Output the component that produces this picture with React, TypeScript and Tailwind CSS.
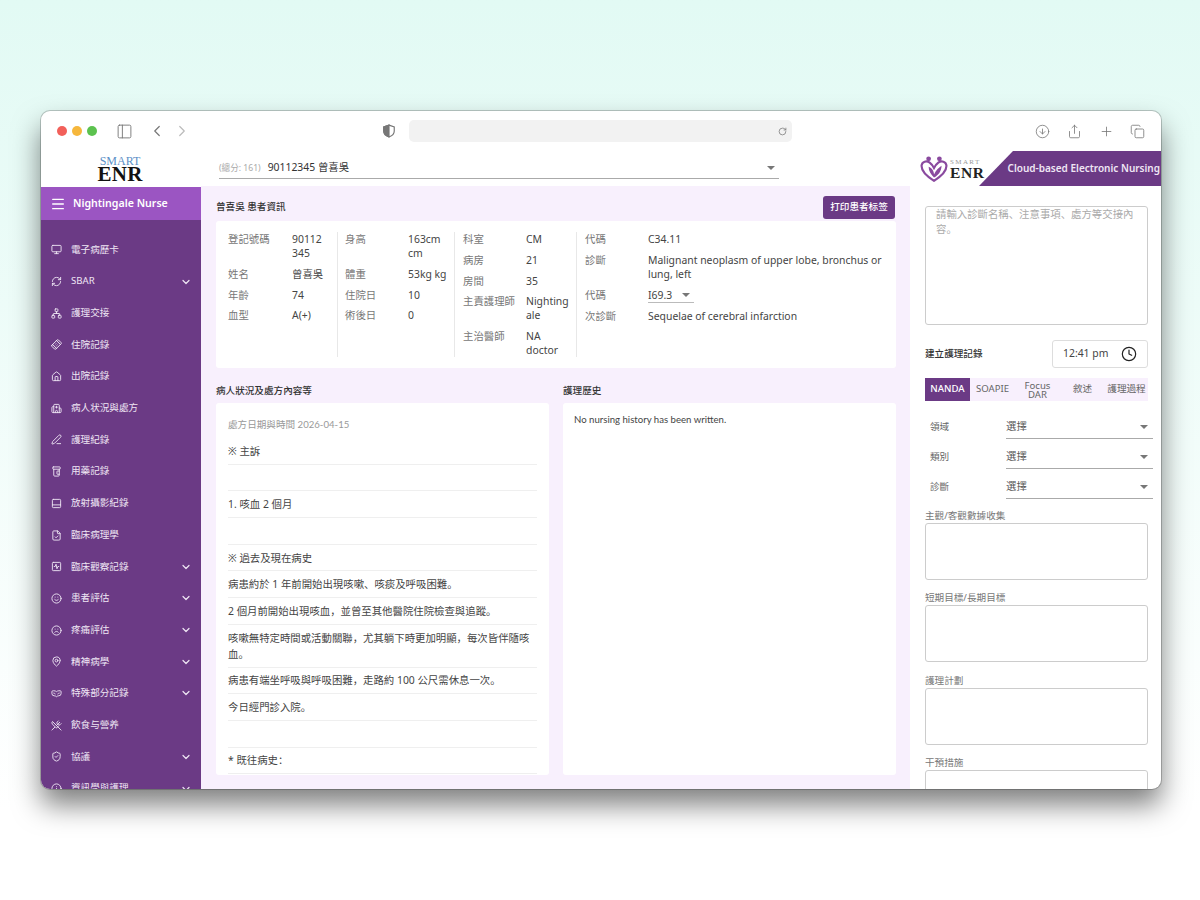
import React from 'react';
import {
  ArrowDownCircle,
  Bandage,
  ChevronDown,
  ChevronLeft,
  ChevronRight,
  Clock,
  Copy,
  FileCheck,
  Frown,
  Home,
  Hospital,
  Info,
  MapPin,
  Menu,
  Monitor,
  Network,
  PanelBottom,
  PanelLeft,
  PenLine,
  PillBottle,
  Plus,
  RefreshCw,
  RotateCw,
  Share,
  ShieldCheck,
  Smile,
  SquareActivity,
  UtensilsCrossed,
  VenetianMask,
} from 'lucide-react';

const FONT = 'font-["Noto_Sans","Noto_Sans_CJK_SC",sans-serif]';

const NAV = [
  { icon: Monitor, label: '電子病歷卡' },
  { icon: RefreshCw, label: 'SBAR', more: true },
  { icon: Network, label: '護理交接' },
  { icon: Bandage, label: '住院記錄', tilt: true },
  { icon: Home, label: '出院記錄' },
  { icon: Hospital, label: '病人状況與處方' },
  { icon: PenLine, label: '護理紀錄' },
  { icon: PillBottle, label: '用藥記錄' },
  { icon: PanelBottom, label: '放射攝影紀錄' },
  { icon: FileCheck, label: '臨床病理學' },
  { icon: SquareActivity, label: '臨床觀察記錄', more: true },
  { icon: Smile, label: '患者評估', more: true },
  { icon: Frown, label: '疼痛評估', more: true },
  { icon: MapPin, label: '精神病學', more: true },
  { icon: VenetianMask, label: '特殊部分記錄', more: true },
  { icon: UtensilsCrossed, label: '飲食与營养' },
  { icon: ShieldCheck, label: '協議', more: true },
  { icon: Info, label: '資訊學與護理', more: true },
];

const NOTES = [
  '※ 主訴',
  '',
  '1. 咳血 2 個月',
  '',
  '※ 過去及現在病史',
  '病患約於 1 年前開始出現咳嗽、咳痰及呼吸困難。',
  '2 個月前開始出現咳血，並曾至其他醫院住院檢查與追蹤。',
  '咳嗽無特定時間或活動關聯，尤其躺下時更加明顯，每次皆伴隨咳血。',
  '病患有端坐呼吸與呼吸困難，走路約 100 公尺需休息一次。',
  '今日經門診入院。',
  '',
  '* 既往病史：',
];

const Row = ({ label, value, labelWidth = 'w-[63px]', valueWidth }: { label: string; value: React.ReactNode; labelWidth?: string; valueWidth: string }) => (
  <div className="flex">
    <div className={`${labelWidth} shrink-0 text-[#777]`}>{label}</div>
    <div className={`${valueWidth} text-[#444]`}>{value}</div>
  </div>
);

const Select = ({ label }: { label: string }) => (
  <div className="flex h-[30px] items-center pl-[5px]">
    <div className="w-[76px] shrink-0 text-[9.6px] text-[#666]">{label}</div>
    <div className="flex h-[23px] w-[147px] shrink-0 items-center justify-between border-b border-[#aaa] pr-[5px] text-[10.4px] text-[#555]">
      <span>選擇</span>
      <span className="h-0 w-0 border-x-[4px] border-t-[4px] border-x-transparent border-t-[#777]" />
    </div>
  </div>
);

const NoteField = ({ label }: { label: string }) => (
  <div className="mb-[11.3px]">
    <div className="mb-[1px] text-[9.6px] leading-[13px] text-[#777]">{label}</div>
    <div className="h-[57px] rounded-[3px] border border-[#ccc]" />
  </div>
);

export default function App() {
  return (
    <div className={`flex h-[900px] w-[1200px] items-center justify-center bg-gradient-to-b from-[#e2faf4] to-white to-90% pl-[2px] ${FONT}`}>
      <div className="flex h-[678px] w-[1120px] flex-col overflow-hidden rounded-[9px] bg-white shadow-[0_16px_28px_rgba(0,0,0,0.5)] ring-1 ring-black/20">
        <div className="flex h-[40px] shrink-0 items-center pl-[16px] pr-[15px] text-[#777]">
          <span className="h-[10px] w-[10px] rounded-full bg-[#f2605a]" />
          <span className="ml-[5px] h-[10px] w-[10px] rounded-full bg-[#f6b73c]" />
          <span className="ml-[5px] h-[10px] w-[10px] rounded-full bg-[#5cc24f]" />
          <PanelLeft size={17} strokeWidth={1.3} className="ml-[19px]" />
          <ChevronLeft size={18} strokeWidth={1.6} className="ml-[15px]" />
          <ChevronRight size={18} strokeWidth={1.6} className="ml-[7px] text-[#bbb]" />
          <svg width="14" height="14" viewBox="0 0 24 24" className="ml-[191px]" fill="none" stroke="currentColor" strokeWidth="2">
            <path d="M12 2 L21 5 V12 C21 17 17 20.5 12 22 C7 20.5 3 17 3 12 V5 Z" />
            <path d="M12 2 L3 5 V12 C3 17 7 20.5 12 22 Z" fill="currentColor" />
          </svg>
          <div className="ml-[13px] flex h-[22px] w-[383px] items-center justify-end rounded-[5px] bg-[#f2f2f2] pr-[5px]">
            <RotateCw size={9} />
          </div>
          <ArrowDownCircle size={15} strokeWidth={1.3} className="ml-[243px]" />
          <Share size={15} strokeWidth={1.3} className="ml-[17px]" />
          <Plus size={15} strokeWidth={1.3} className="ml-[17px]" />
          <Copy size={15} strokeWidth={1.3} className="ml-[16px]" />
        </div>

        <div className="flex min-h-0 flex-1">
          <div className="flex w-[160px] shrink-0 flex-col">
            <div className="flex h-[36px] shrink-0 flex-col items-center justify-center pr-[2px] font-['Liberation_Serif',serif]">
              <span className="text-[12px] leading-[10px] text-[#5b8fc7]">SMART</span>
              <span className="text-[21px] font-bold leading-[17px] tracking-[0.3px] text-[#111]">ENR</span>
            </div>
            <div className="flex h-[33px] shrink-0 items-center bg-[#9b55c2] pl-[9px] text-white">
              <Menu size={16} />
              <span className="ml-[7px] text-[10.6px] font-semibold">Nightingale Nurse</span>
            </div>
            <div className="min-h-0 flex-1 overflow-hidden bg-[#6b3a85] pt-[14px]">
              {NAV.map(({ icon: Icon, label, more, tilt }) => (
                <div key={label} className="flex h-[31.7px] items-center pl-[10px] pr-[9px] text-[#efe6f4]">
                  <Icon size={11} strokeWidth={2} className={tilt ? '-rotate-45' : ''} />
                  <span className="ml-[9px] flex-1 text-[9.6px]">{label}</span>
                  {more && <ChevronDown size={12} strokeWidth={2.4} />}
                </div>
              ))}
            </div>
          </div>

          <div className="flex w-[709px] shrink-0 flex-col">
            <div className="flex h-[35px] shrink-0 items-center pl-[18px]">
              <div className="flex h-[20px] w-[560px] items-center border-b border-[#aaa] pr-[4px]">
                <span className="text-[8.6px] text-[#aaa]">(總分: 161)</span>
                <span className="ml-[7px] flex-1 text-[10.4px] text-[#333]">90112345 曾喜吳</span>
                <span className="h-0 w-0 border-x-[4px] border-t-[4px] border-x-transparent border-t-[#777]" />
              </div>
            </div>
            <div className="min-h-0 flex-1 bg-[#f8f0fd] pl-[15px] pr-[14px]">
              <div className="flex h-[35px] items-center justify-between pt-[7px]">
                <span className="text-[9.6px] font-medium text-[#333]">曾喜吳 患者資訊</span>
                <button className="mr-[1px] h-[23px] w-[72px] rounded-[3px] bg-[#6b3a85] text-[9.6px] font-medium text-white">打印患者标签</button>
              </div>

              <div className="flex h-[147px] rounded-[3px] bg-white py-[11px] text-[10.4px] leading-[14px]">
                <div className="flex w-[122px] shrink-0 flex-col gap-[6.8px] border-r border-[#e8e8e8] pl-[12px]">
                  <Row label="登記號碼" labelWidth="w-[64px]" value={<>90112<br />345</>} valueWidth="w-[36px]" />
                  <Row label="姓名" labelWidth="w-[64px]" value="曾喜吳" valueWidth="w-[36px]" />
                  <Row label="年齡" labelWidth="w-[64px]" value="74" valueWidth="w-[36px]" />
                  <Row label="血型" labelWidth="w-[64px]" value="A(+)" valueWidth="w-[36px]" />
                </div>
                <div className="flex w-[117px] shrink-0 flex-col gap-[6.8px] border-r border-[#e8e8e8] pl-[7px]">
                  <Row label="身高" value={<>163cm<br />cm</>} valueWidth="w-[42px]" />
                  <Row label="體重" value="53kg kg" valueWidth="w-[42px]" />
                  <Row label="住院日" value="10" valueWidth="w-[42px]" />
                  <Row label="術後日" value="0" valueWidth="w-[42px]" />
                </div>
                <div className="flex w-[122px] shrink-0 flex-col gap-[6.8px] border-r border-[#e8e8e8] pl-[8px]">
                  <Row label="科室" value="CM" valueWidth="w-[45px]" />
                  <Row label="病房" value="21" valueWidth="w-[45px]" />
                  <Row label="房間" value="35" valueWidth="w-[45px]" />
                  <Row label="主責護理師" value={<>Nighting<br />ale</>} valueWidth="w-[45px]" />
                  <Row label="主治醫師" value={<>NA<br />doctor</>} valueWidth="w-[45px]" />
                </div>
                <div className="flex flex-1 flex-col gap-[6.8px] pl-[8px]">
                  <Row label="代碼" value="C34.11" valueWidth="w-[240px]" />
                  <Row label="診斷" value="Malignant neoplasm of upper lobe, bronchus or lung, left" valueWidth="w-[240px]" />
                  <Row
                    label="代碼"
                    value={
                      <div className="flex h-[15px] w-[46px] items-center justify-between border-b border-[#bbb] pr-[4px]">
                        <span>I69.3</span>
                        <span className="h-0 w-0 border-x-[4px] border-t-[4px] border-x-transparent border-t-[#777]" />
                      </div>
                    }
                    valueWidth="w-[240px]"
                  />
                  <Row label="次診斷" value="Sequelae of cerebral infarction" valueWidth="w-[240px]" />
                </div>
              </div>

              <div className="mt-[16px] flex gap-[14px]">
                <div className="w-[333px]">
                  <div className="mb-[6px] text-[9.6px] font-medium leading-[13px] text-[#333]">病人狀況及處方內容等</div>
                  <div className="h-[372px] overflow-hidden rounded-[3px] bg-white px-[12px] pt-[14px]">
                    <div className="mb-[5px] font-['Lato','Noto_Sans_CJK_SC',sans-serif] text-[9.6px] leading-[16px] text-[#999]">處方日期與時間 2026-04-15</div>
                    {NOTES.map((line, i) => (
                      <div key={i} className="min-h-[26.7px] border-b border-[#efefef] py-[4.85px] text-[10.4px] leading-[16px] text-[#444]">
                        {line}
                      </div>
                    ))}
                  </div>
                </div>
                <div className="w-[333px]">
                  <div className="mb-[6px] text-[9.6px] font-medium leading-[13px] text-[#333]">護理歷史</div>
                  <div className="h-[372px] rounded-[3px] bg-white px-[11px] pt-[9px] font-['Lato',sans-serif] text-[9.6px] leading-[16px] text-[#444]">
                    No nursing history has been written.
                  </div>
                </div>
              </div>
            </div>
          </div>

          <div className="min-w-0 flex-1 overflow-hidden">
            <div className="flex h-[35px] items-center">
              <svg width="28" height="28" viewBox="0 0 26 26" className="ml-[10px] shrink-0" fill="none" stroke="#8a4a9f">
                <circle cx="8" cy="3.5" r="2.2" fill="#8a4a9f" stroke="none" />
                <circle cx="18" cy="3.5" r="2.2" fill="#8a4a9f" stroke="none" />
                <path d="M13 24 C5 19 1 14 1.5 9.5 C2 6 6 5 9 7 C11 8.5 12 10 13 12 C14 10 15 8.5 17 7 C20 5 24 6 24.5 9.5 C25 14 21 19 13 24Z" strokeWidth="2" />
                <path d="M8 11 C11 12 13 15 13 18 C15 14 17 12 20 10 C20 15 17 19 13 21 C10 18 8 15 8 11Z" fill="#8a4a9f" stroke="none" />
              </svg>
              <div className="ml-[2px] flex w-[39px] shrink-0 flex-col font-['Liberation_Serif',serif]">
                <span className="text-[7px] leading-[8px] tracking-[1.4px] text-[#999]">SMART</span>
                <span className="text-[15.5px] font-bold leading-[13px] tracking-[0.6px] text-[#222]">ENR</span>
              </div>
              <div className="ml-[-10px] flex h-[35px] w-[182px] shrink-0 items-center justify-end bg-[#6b3a85] pr-[1px] [clip-path:polygon(34px_0,100%_0,100%_100%,0_100%)]">
                <span className="whitespace-nowrap text-[10px] font-semibold text-[#efe6f4]">Cloud-based Electronic Nursing</span>
              </div>
            </div>

            <div className="pl-[15px] pr-[13px] pt-[20px]">
              <div className="h-[119px] rounded-[3px] border border-[#ccc] px-[10px] text-[10.4px] leading-[15px] text-[#aaa]">
                請輸入診斷名稱、注意事項、處方等交接內容。
              </div>

              <div className="mt-[15px] flex items-center justify-between">
                <span className="text-[9.6px] font-medium text-[#333]">建立護理記錄</span>
                <div className="flex h-[28px] w-[96px] items-center justify-between rounded-[3px] border border-[#ddd] px-[10px] text-[10.4px] text-[#444]">
                  <span>12:41 pm</span>
                  <Clock size={16} strokeWidth={1.8} className="text-[#222]" />
                </div>
              </div>

              <div className="mt-[10px] flex h-[23px] w-[223px] bg-[#f8f0fd] text-center text-[9.6px] text-[#666]">
                <div className="flex w-[45px] items-center justify-center bg-[#6b3a85] font-medium text-white">NANDA</div>
                <div className="flex w-[45px] items-center justify-center">SOAPIE</div>
                <div className="flex w-[45px] items-center justify-center leading-[9px]">Focus<br />DAR</div>
                <div className="flex w-[45px] items-center justify-center">敘述</div>
                <div className="flex w-[43px] items-center justify-center">護理過程</div>
              </div>

              <div className="mt-[11px]">
                <Select label="領域" />
                <Select label="類別" />
                <Select label="診斷" />
              </div>

              <div className="mt-[7px] w-[223px]">
                <NoteField label="主觀/客觀數據收集" />
                <NoteField label="短期目標/長期目標" />
                <NoteField label="護理計劃" />
                <NoteField label="干預措施" />
              </div>
            </div>
          </div>
        </div>
      </div>
    </div>
  );
}
